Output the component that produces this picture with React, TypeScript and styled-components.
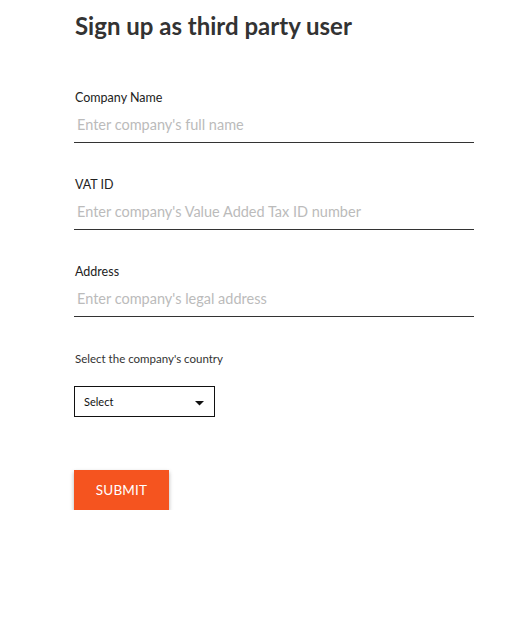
import React from "react";
import styled, { createGlobalStyle } from "styled-components";

const GlobalStyle = createGlobalStyle`
  body {
    margin: 0;
    background: #fff;
    font-family: Lato, "Open Sans", sans-serif;
  }
`;

const fields = [
  { label: "Company Name", placeholder: "Enter company's full name" },
  { label: "VAT ID", placeholder: "Enter company's Value Added Tax ID number" },
  { label: "Address", placeholder: "Enter company's legal address" },
];

const App = () => {
  return (
    <Page>
      <GlobalStyle />
      <Title>Sign up as third party user</Title>
      {fields.map((f) => (
        <Field key={f.label}>
          <Label>{f.label}</Label>
          <Input placeholder={f.placeholder} />
        </Field>
      ))}
      <SmallLabel>Select the company's country</SmallLabel>
      <SelectBox>
        <span>Select</span>
        <svg width="9" height="5" viewBox="0 0 9 5">
          <path d="M0 0 L9 0 L4.5 4.5 Z" fill="#111" />
        </svg>
      </SelectBox>
      <SubmitButton type="button">SUBMIT</SubmitButton>
    </Page>
  );
};

export default App;

const Page = styled.div`
  width: 400px;
  padding: 12px 0 0 74px;
  display: flex;
  flex-direction: column;
`;

const Title = styled.h1`
  margin: 0 0 0 1px;
  font-size: 24px;
  font-weight: 700;
  color: #333;
  line-height: 28px;
`;

const Field = styled.div`
  display: flex;
  flex-direction: column;
  margin-top: 50px;
  & + & {
    margin-top: 34px;
  }
`;

const Label = styled.label`
  font-size: 12.5px;
  color: #222;
  margin-left: 1px;
  line-height: 16px;
`;

const Input = styled.input`
  border: none;
  border-bottom: 1px solid #333;
  outline: none;
  font-family: inherit;
  font-size: 14.5px;
  line-height: 18px;
  height: 37px;
  box-sizing: border-box;
  padding: 10px 3px 9px;
  color: #333;
  background: transparent;
  &::placeholder {
    color: #bbb;
  }
`;

const SmallLabel = styled.div`
  margin-top: 35px;
  margin-left: 1px;
  font-size: 11.5px;
  color: #333;
  line-height: 14px;
`;

const SelectBox = styled.div`
  margin-top: 20px;
  width: 141px;
  height: 31px;
  box-sizing: border-box;
  border: 1px solid #111;
  display: flex;
  align-items: center;
  justify-content: space-between;
  padding: 0 10px 0 9px;
  font-size: 11px;
  color: #111;
  svg {
    margin-top: 3px;
  }
`;

const SubmitButton = styled.button`
  margin-top: 53px;
  width: 95px;
  height: 40px;
  border: none;
  background: #f5541f;
  color: #fff;
  font-family: inherit;
  font-size: 13.5px;
  letter-spacing: 0.2px;
  box-shadow: 0 2px 4px rgba(0, 0, 0, 0.3);
  cursor: pointer;
`;
